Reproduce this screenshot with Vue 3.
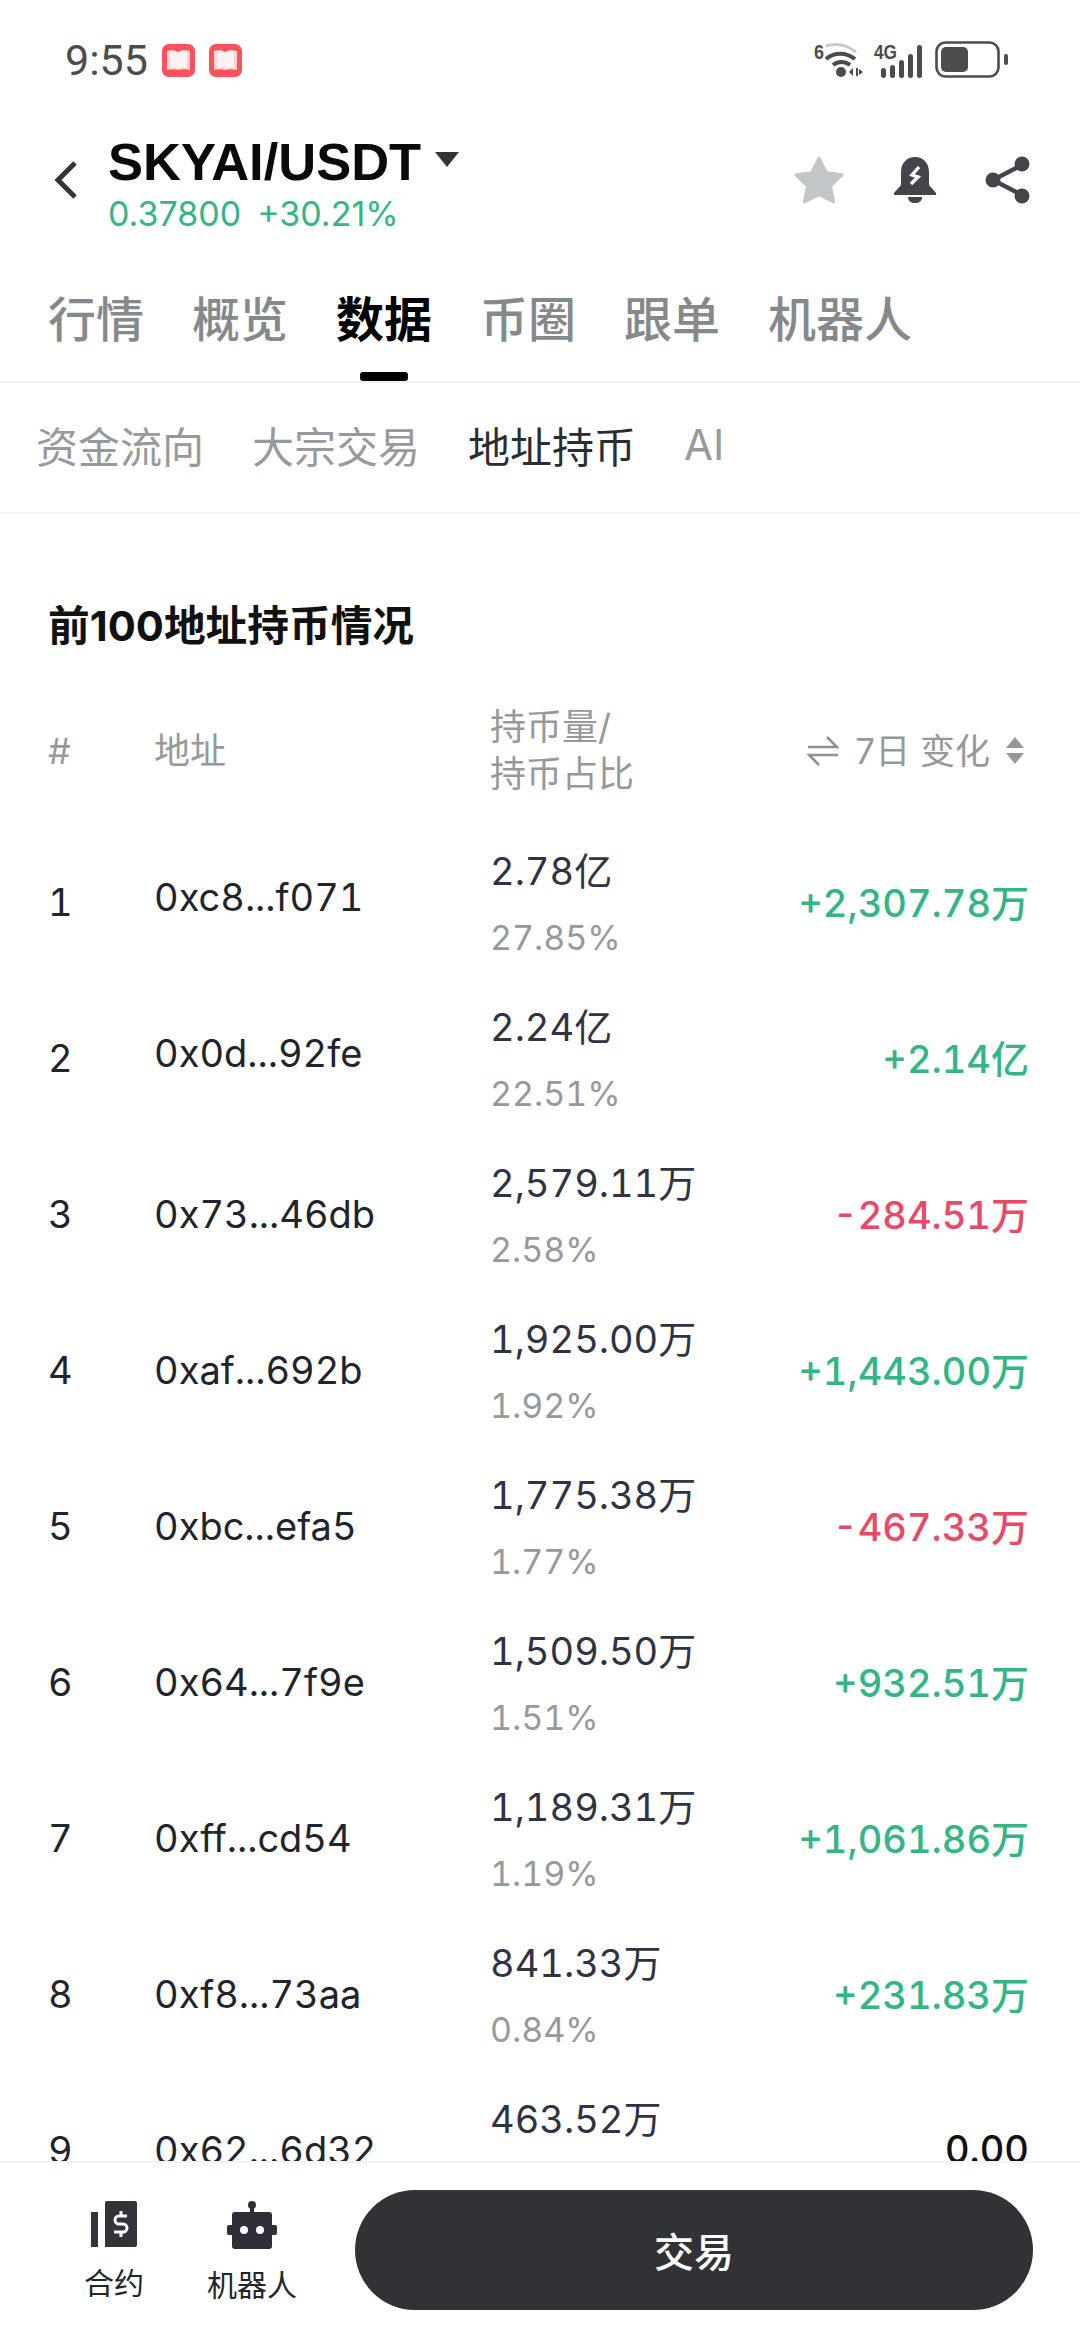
<template>
  <div class="page">
    <div class="status">
      <span class="time">9:55</span>
      <svg v-for="n in 2" :key="n" class="app-badge" viewBox="0 0 33 33">
        <rect width="33" height="33" rx="7" fill="#f9525a" />
        <path d="M5 7c4-1 8-1 11 1 3-2 7-2 12-1v19c-4-1-8-1-12 0-3-1-7-1-11 0z" fill="#fbd3d3" />
        <path d="M8 7c3-1 6 0 8 2 2-2 5-3 9-2v17c-3-1-6-1-9 1-2-2-5-2-8-1z" fill="#fdf1f1" />
      </svg>
      <div class="sys-icons">
        <svg width="50" height="36" viewBox="0 0 50 36">
          <text x="0" y="17" class="sys-text" textLength="10" lengthAdjust="spacingAndGlyphs">6</text>
          <path d="M12 4c10-3 20-2 30 6" fill="none" stroke="#c9c9c9" stroke-width="3" />
          <path d="M12 17c8-7 20-7 29 0" fill="none" stroke="#4c4c4c" stroke-width="4" />
          <path d="M19 23c5-4 12-4 17 0" fill="none" stroke="#4c4c4c" stroke-width="4" />
          <circle cx="27" cy="30" r="5" fill="#4c4c4c" />
          <path d="M35 30l4-4v8zM42 26h2v8h-2zM45 27l4 3-4 3z" fill="#4c4c4c" />
        </svg>
        <svg width="50" height="36" viewBox="0 0 50 36">
          <text x="0" y="17" class="sys-text" textLength="23" lengthAdjust="spacingAndGlyphs">4G</text>
          <rect x="7" y="26" width="5" height="10" rx="2.5" fill="#4c4c4c" />
          <rect x="16" y="23" width="5" height="13" rx="2.5" fill="#4c4c4c" />
          <rect x="25" y="18" width="5" height="18" rx="2.5" fill="#4c4c4c" />
          <rect x="34" y="12" width="5" height="24" rx="2.5" fill="#4c4c4c" />
          <rect x="43" y="3" width="5" height="33" rx="2.5" fill="#4c4c4c" />
        </svg>
        <svg class="battery" width="74" height="38" viewBox="0 0 74 38">
          <rect x="1.5" y="1.5" width="62" height="34" rx="9" fill="none" stroke="#4c4c4c" stroke-width="2.6" />
          <rect x="6" y="6" width="27" height="25" rx="5" fill="#4c4c4c" />
          <rect x="69" y="13" width="4" height="11" rx="2" fill="#4c4c4c" />
        </svg>
      </div>
    </div>

    <header class="head">
      <svg class="back" width="24" height="40" viewBox="0 0 24 40">
        <path d="M21 3L4 20l17 17" fill="none" stroke="#333438" stroke-width="5" />
      </svg>
      <div class="pair">
        <div class="title">SKYAI/USDT<span class="caret"></span></div>
        <div class="price"><span>0.37800</span><span>+30.21%</span></div>
      </div>
      <div class="actions">
        <svg width="52" height="50" viewBox="0 0 50 48">
          <path d="M25 3l7 14 15 2-11 11 3 15-14-7-14 7 3-15L3 19l15-2z" fill="#c2c6c9" stroke="#c2c6c9" stroke-width="3" stroke-linejoin="round" />
        </svg>
        <svg width="44" height="48" viewBox="0 0 44 48">
          <path d="M22 1c8 0 14 6 14 15v13l7 8v2H1v-2l7-8V16C8 7 14 1 22 1z" fill="#43454d" />
          <path d="M15 41h14c0 4-3 6-7 6s-7-2-7-6z" fill="#43454d" />
          <path d="M26 11l-7 8 6 2-7 7" fill="none" stroke="#fff" stroke-width="3.4" />
        </svg>
        <svg width="46" height="48" viewBox="0 0 46 48">
          <path d="M37 9L8 24l29 15" fill="none" stroke="#43454d" stroke-width="4.5" />
          <circle cx="37" cy="8" r="7.5" fill="#43454d" />
          <circle cx="8" cy="24" r="7.5" fill="#43454d" />
          <circle cx="37" cy="40" r="7.5" fill="#43454d" />
        </svg>
      </div>
    </header>

    <nav class="tabs">
      <span v-for="tab in tabs" :key="tab" class="tab" :class="{ active: tab === '数据' }">{{ tab }}</span>
    </nav>

    <nav class="subtabs">
      <span v-for="tab in subTabs" :key="tab" class="subtab" :class="{ active: tab === '地址持币' }">{{ tab }}</span>
    </nav>

    <main class="content">
      <h2 class="heading">前100地址持币情况</h2>
      <div class="table-head">
        <span>#</span>
        <span>地址</span>
        <span class="stack">持币量/<br />持币占比</span>
        <span class="change-head">
          <svg width="32" height="30" viewBox="0 0 32 30">
            <path d="M1 11h29L20 1M31 19H2l10 10" fill="none" stroke="#8f9194" stroke-width="2.6" />
          </svg>
          <span class="change-label">7日 变化</span>
          <svg width="18" height="28" viewBox="0 0 18 28">
            <path d="M9 0l9 11H0zM0 16h18L9 27z" fill="#96989b" />
          </svg>
        </span>
      </div>
      <div v-for="row in rows" :key="row.rank" class="row">
        <span class="rank">{{ row.rank }}</span>
        <span class="addr" :class="{ lifted: row.rank < 3 }">{{ row.addr }}</span>
        <div class="hold">
          <span class="amount">{{ row.amount }}</span>
          <span class="pct">{{ row.pct }}</span>
        </div>
        <span class="change" :class="row.tone">{{ row.change }}</span>
      </div>
    </main>

    <footer class="bottom">
      <div class="tool">
        <svg width="46" height="46" viewBox="0 0 46 46">
          <rect x="0" y="11" width="7" height="35" fill="#33343a" />
          <path d="M14 2a2 2 0 0 1 2-2h28a2 2 0 0 1 2 2v42a2 2 0 0 1-2 2H14z" fill="#33343a" />
          <path d="M36 15h-8a3 3 0 0 0 0 8h4a3 3 0 0 1 0 8h-9M30 10v4M30 31v5" fill="none" stroke="#fff" stroke-width="3" />
        </svg>
        <span>合约</span>
      </div>
      <div class="tool">
        <svg width="50" height="48" viewBox="0 0 50 48">
          <circle cx="25" cy="4" r="4" fill="#2c2e38" />
          <rect x="23" y="4" width="4" height="8" fill="#2c2e38" />
          <rect x="5" y="11" width="40" height="37" rx="3" fill="#2c2e38" />
          <rect x="0" y="24" width="50" height="10" rx="2" fill="#2c2e38" />
          <circle cx="17" cy="29" r="4" fill="#fff" />
          <circle cx="33" cy="29" r="4" fill="#fff" />
        </svg>
        <span>机器人</span>
      </div>
      <button class="trade">交易</button>
    </footer>
  </div>
</template>

<script setup>
const tabs = ['行情', '概览', '数据', '币圈', '跟单', '机器人']
const subTabs = ['资金流向', '大宗交易', '地址持币', 'AI']

const rows = [
  { rank: 1, addr: '0xc8...f071', amount: '2.78亿', pct: '27.85%', change: '+2,307.78万', tone: 'up' },
  { rank: 2, addr: '0x0d...92fe', amount: '2.24亿', pct: '22.51%', change: '+2.14亿', tone: 'up' },
  { rank: 3, addr: '0x73...46db', amount: '2,579.11万', pct: '2.58%', change: '-284.51万', tone: 'down' },
  { rank: 4, addr: '0xaf...692b', amount: '1,925.00万', pct: '1.92%', change: '+1,443.00万', tone: 'up' },
  { rank: 5, addr: '0xbc...efa5', amount: '1,775.38万', pct: '1.77%', change: '-467.33万', tone: 'down' },
  { rank: 6, addr: '0x64...7f9e', amount: '1,509.50万', pct: '1.51%', change: '+932.51万', tone: 'up' },
  { rank: 7, addr: '0xff...cd54', amount: '1,189.31万', pct: '1.19%', change: '+1,061.86万', tone: 'up' },
  { rank: 8, addr: '0xf8...73aa', amount: '841.33万', pct: '0.84%', change: '+231.83万', tone: 'up' },
  { rank: 9, addr: '0x62...6d32', amount: '463.52万', pct: '0.46%', change: '0.00', tone: 'flat' }
]
</script>

<style scoped>
.page {
  width: 1080px;
  height: 2340px;
  display: flex;
  flex-direction: column;
  overflow: hidden;
  background: #fff;
  color: #22242b;
  font-family: Inter, "Noto Sans CJK SC", sans-serif;
}

.status {
  height: 122px;
  flex: none;
  display: flex;
  align-items: center;
  padding: 0 71px 2px 65px;
  box-sizing: border-box;
}

.time {
  font-family: Roboto, sans-serif;
  font-size: 43px;
  color: #4c4c4c;
  margin-right: 14px;
}

.app-badge {
  width: 33px;
  height: 33px;
  margin-right: 14px;
}

.sys-icons {
  margin-left: auto;
  display: flex;
  align-items: center;
  gap: 10px;
}

.sys-text {
  font-family: "Liberation Sans", sans-serif;
  font-weight: 700;
  font-size: 21px;
  fill: #4c4c4c;
}

.battery {
  margin-left: 1px;
}

.head {
  height: 118px;
  flex: none;
  display: flex;
  align-items: center;
  padding: 0 49px 0 54px;
  box-sizing: border-box;
}

.back {
  margin: 0 30px 2px 0;
}

.title {
  display: flex;
  align-items: center;
  height: 60px;
  padding-top: 4px;
  font-family: "Liberation Sans", sans-serif;
  font-weight: 700;
  font-size: 52.5px;
  line-height: 60px;
  color: #0a0a0a;
}

.caret {
  width: 0;
  height: 0;
  margin: 0 0 6px 14px;
  border-left: 12px solid transparent;
  border-right: 12px solid transparent;
  border-top: 15px solid #333438;
}

.price {
  display: flex;
  gap: 16px;
  margin-top: 2px;
  font-size: 34px;
  line-height: 40px;
  color: #33b585;
}

.actions {
  margin: 0 0 3px auto;
  display: flex;
  align-items: center;
  gap: 48px;
}

.tabs {
  height: 143px;
  flex: none;
  display: flex;
  gap: 48px;
  padding: 50px 0 0 48px;
  box-sizing: border-box;
  border-bottom: 2px solid #f1f2f3;
}

.tab {
  position: relative;
  height: 60px;
  font-size: 48px;
  line-height: 60px;
  font-weight: 500;
  color: #86898c;
}

.tab.active {
  color: #000;
  font-weight: 700;
}

.tab.active::after {
  content: "";
  position: absolute;
  left: 24px;
  top: 82px;
  width: 48px;
  height: 9px;
  border-radius: 3px;
  background: #000;
}

.subtabs {
  height: 131px;
  flex: none;
  display: flex;
  align-items: center;
  gap: 48px;
  padding: 0 0 7px 36px;
  box-sizing: border-box;
  border-bottom: 2px solid #f1f2f3;
  font-size: 42px;
  color: #97999c;
}

.subtab.active {
  color: #2c2d31;
}

.content {
  flex: 1;
  min-height: 0;
  overflow: hidden;
  padding: 82px 51px 0 48px;
}

.heading {
  margin: 0 0 48px;
  font-size: 41.7px;
  line-height: 60px;
  font-weight: 700;
  color: #111;
}

.table-head,
.row {
  display: grid;
  grid-template-columns: 106px 336px 1fr auto;
  align-items: center;
}

.table-head {
  margin-bottom: 26px;
  font-size: 36px;
  line-height: 47px;
  color: #96989b;
}

.change-head {
  display: flex;
  align-items: center;
  margin-right: 5px;
}

.change-label {
  margin: 0 16px 0 16px;
  font-size: 35px;
}

.row {
  height: 156px;
  font-variant-numeric: tabular-nums;
}

.rank,
.addr {
  font-size: 38px;
  color: #22242b;
}

.addr.lifted {
  margin-bottom: 10px;
}

.hold {
  display: flex;
  flex-direction: column;
  gap: 23px;
}

.amount {
  font-size: 38px;
  line-height: 48px;
  color: #2f3342;
}

.pct {
  font-size: 34px;
  line-height: 40px;
  color: #97999c;
}

.change {
  margin-bottom: 3px;
  font-size: 38px;
  font-weight: 500;
}

.change.up {
  color: #33b585;
}

.change.down {
  color: #e54b66;
}

.change.flat {
  color: #111;
}

.bottom {
  height: 179px;
  flex: none;
  display: flex;
  align-items: flex-start;
  gap: 18px;
  padding: 27px 47px 0 54px;
  box-sizing: border-box;
  border-top: 2px solid #f1f2f3;
  background: #fff;
}

.tool {
  width: 120px;
  padding-top: 11px;
  display: flex;
  flex-direction: column;
  align-items: center;
  gap: 16px;
  font-size: 30px;
  line-height: 40px;
  color: #24262c;
}

.trade {
  flex: 1;
  height: 120px;
  margin-left: 25px;
  border: none;
  border-radius: 60px;
  background: #303236;
  color: #fff;
  font-family: inherit;
  font-size: 40px;
  font-weight: 500;
}
</style>
